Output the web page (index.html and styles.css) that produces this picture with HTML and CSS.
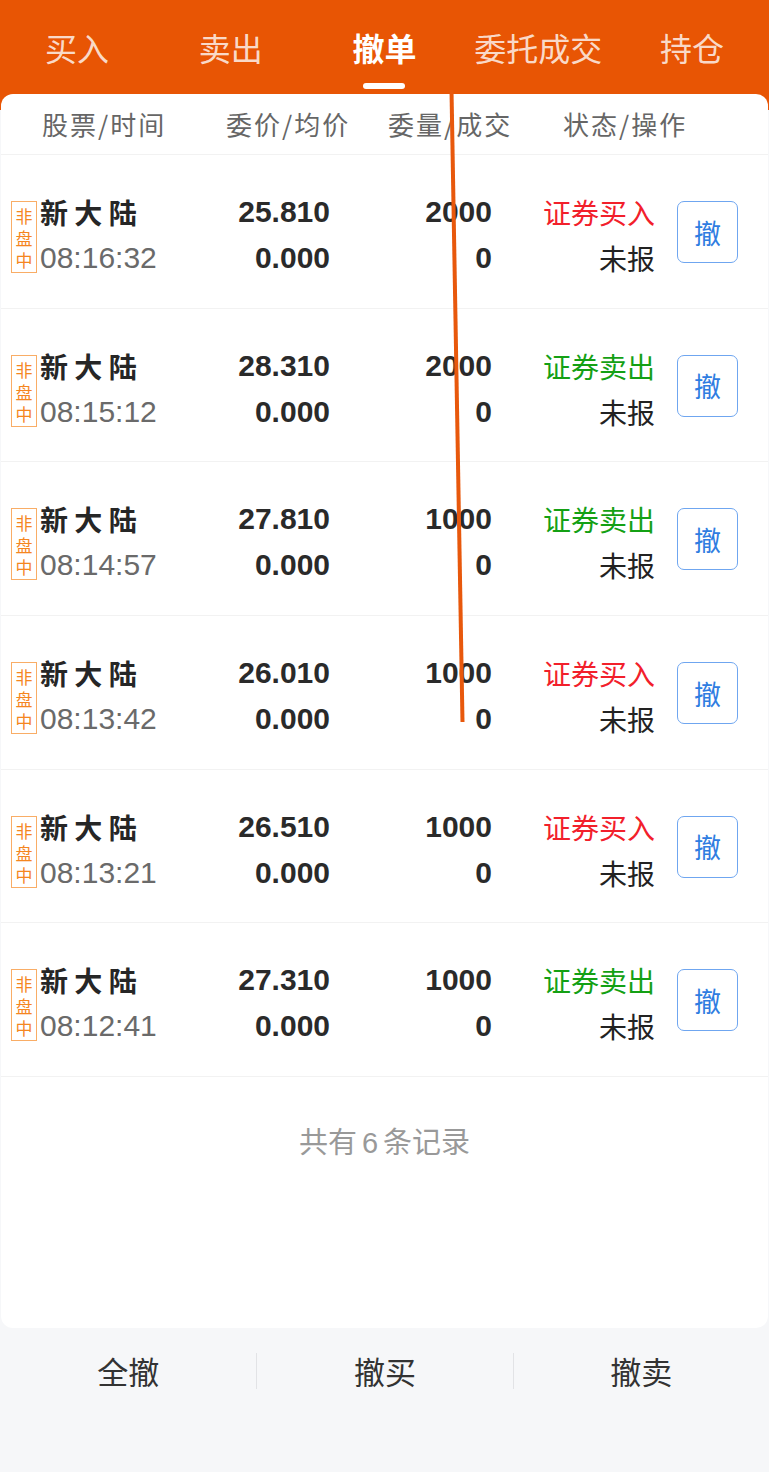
FILE: index.html
```html
<!DOCTYPE html>
<html lang="zh-CN">
<head>
    <meta charset="UTF-8">
    <meta name="viewport" content="width=device-width, initial-scale=1.0">
    <title>撤单</title>
    <link rel="stylesheet" href="styles.css">
</head>
<body>
    <div class="page">
        <div class="tabs">
            <div class="tab">买入</div>
            <div class="tab">卖出</div>
            <div class="tab active">撤单</div>
            <div class="tab">委托成交</div>
            <div class="tab">持仓</div>
        </div>

        <div class="card">
            <div class="list-head">
                <span>股票/时间</span>
                <span>委价/均价</span>
                <span>委量/成交</span>
                <span>状态/操作</span>
            </div>

            <div class="order">
                <div class="stock">
                    <div class="badge">非盘中</div>
                    <div>
                        <div class="name">新 大 陆</div>
                        <div class="time">08:16:32</div>
                    </div>
                </div>
                <div class="num"><div>25.810</div><div>0.000</div></div>
                <div class="num"><div>2000</div><div>0</div></div>
                <div class="status"><div class="buy">证券买入</div><div>未报</div></div>
                <button class="cancel">撤</button>
            </div>

            <div class="order">
                <div class="stock">
                    <div class="badge">非盘中</div>
                    <div>
                        <div class="name">新 大 陆</div>
                        <div class="time">08:15:12</div>
                    </div>
                </div>
                <div class="num"><div>28.310</div><div>0.000</div></div>
                <div class="num"><div>2000</div><div>0</div></div>
                <div class="status"><div class="sell">证券卖出</div><div>未报</div></div>
                <button class="cancel">撤</button>
            </div>

            <div class="order">
                <div class="stock">
                    <div class="badge">非盘中</div>
                    <div>
                        <div class="name">新 大 陆</div>
                        <div class="time">08:14:57</div>
                    </div>
                </div>
                <div class="num"><div>27.810</div><div>0.000</div></div>
                <div class="num"><div>1000</div><div>0</div></div>
                <div class="status"><div class="sell">证券卖出</div><div>未报</div></div>
                <button class="cancel">撤</button>
            </div>

            <div class="order">
                <div class="stock">
                    <div class="badge">非盘中</div>
                    <div>
                        <div class="name">新 大 陆</div>
                        <div class="time">08:13:42</div>
                    </div>
                </div>
                <div class="num"><div>26.010</div><div>0.000</div></div>
                <div class="num"><div>1000</div><div>0</div></div>
                <div class="status"><div class="buy">证券买入</div><div>未报</div></div>
                <button class="cancel">撤</button>
            </div>

            <div class="order">
                <div class="stock">
                    <div class="badge">非盘中</div>
                    <div>
                        <div class="name">新 大 陆</div>
                        <div class="time">08:13:21</div>
                    </div>
                </div>
                <div class="num"><div>26.510</div><div>0.000</div></div>
                <div class="num"><div>1000</div><div>0</div></div>
                <div class="status"><div class="buy">证券买入</div><div>未报</div></div>
                <button class="cancel">撤</button>
            </div>

            <div class="order">
                <div class="stock">
                    <div class="badge">非盘中</div>
                    <div>
                        <div class="name">新 大 陆</div>
                        <div class="time">08:12:41</div>
                    </div>
                </div>
                <div class="num"><div>27.310</div><div>0.000</div></div>
                <div class="num"><div>1000</div><div>0</div></div>
                <div class="status"><div class="sell">证券卖出</div><div>未报</div></div>
                <button class="cancel">撤</button>
            </div>

            <div class="total">共有<span class="count">6</span>条记录</div>
        </div>

        <div class="actions">
            <div class="action">全撤</div>
            <div class="action">撤买</div>
            <div class="action">撤卖</div>
        </div>

        <svg class="mark" width="769" height="1472" viewBox="0 0 769 1472">
            <line x1="451.5" y1="90" x2="462.5" y2="722" stroke="#e8580c" stroke-width="4"/>
        </svg>
    </div>
</body>
</html>
```

FILE: styles.css
```css
body {
    margin: 0;
    background-color: #f6f7f9;
    font-family: "Liberation Sans", "Noto Sans CJK SC", sans-serif;
    color: #222;
}
.page {
    position: relative;
    width: 769px;
    height: 1472px;
    overflow: hidden;
}
.tabs {
    display: grid;
    grid-template-columns: repeat(5, 1fr);
    height: 110px;
    background-color: #e85504;
}
.tab {
    position: relative;
    text-align: center;
    font-family: "Noto Sans CJK SC", sans-serif;
    font-size: 32px;
    line-height: 46px;
    padding-top: 24px;
    color: rgba(255, 255, 255, 0.8);
}
.tab.active {
    color: #fff;
    font-weight: bold;
}
.tab.active::after {
    content: "";
    position: absolute;
    left: 50%;
    top: 83px;
    width: 42px;
    height: 6px;
    margin-left: -21px;
    border-radius: 3px;
    background-color: #fff;
}
.card {
    margin: -16px 1px 0 1px;
    height: 1234px;
    background-color: #fff;
    border-radius: 12px;
}
.list-head {
    display: grid;
    grid-template-columns: 184px 162px 175px 1fr;
    padding-left: 41px;
    height: 60px;
    line-height: 60px;
    border-bottom: 1px solid #f2f2f2;
    font-family: "Noto Sans CJK SC", sans-serif;
    font-size: 26px;
    letter-spacing: 2px;
    color: #666;
}
.order {
    display: grid;
    grid-template-columns: 209px 110px 162px 163px 83px;
    align-items: start;
    box-sizing: border-box;
    height: 153.7px;
    padding: 34px 0 0 10px;
    border-bottom: 1px solid #f2f2f2;
    line-height: 46px;
}
.stock {
    display: flex;
    align-items: flex-start;
    gap: 3px;
}
.badge {
    width: 26px;
    box-sizing: border-box;
    height: 72px;
    margin-top: 12px;
    padding-top: 3px;
    border: 1px solid #f9ad66;
    font-family: "Noto Sans CJK SC", sans-serif;
    font-size: 17px;
    line-height: 22px;
    text-align: center;
    color: #f5861f;
}
.name {
    font-family: "Noto Sans CJK SC", sans-serif;
    font-size: 28px;
    font-weight: bold;
    color: #262626;
}
.time {
    font-size: 30px;
    color: #6a6a6a;
}
.num {
    text-align: right;
    font-size: 30px;
    font-weight: bold;
    color: #2a2a2a;
}
.status {
    text-align: right;
    font-family: "Noto Sans CJK SC", sans-serif;
    font-size: 28px;
    color: #222;
}
.buy {
    color: #f2202b;
}
.sell {
    color: #14a014;
}
.cancel {
    justify-self: end;
    width: 61px;
    height: 62px;
    margin-top: 12px;
    padding: 0;
    border: 1.5px solid #6fa6f0;
    border-radius: 7px;
    background-color: #fff;
    font-family: "Noto Sans CJK SC", sans-serif;
    font-size: 27px;
    color: #2f7de1;
}
.total {
    padding-top: 46px;
    line-height: 34px;
    text-align: center;
    font-family: "Noto Sans CJK SC", sans-serif;
    font-size: 29px;
    color: #999;
}
.count {
    font-family: "Liberation Sans", sans-serif;
    margin: 0 5px;
}
.actions {
    display: grid;
    grid-template-columns: repeat(3, 1fr);
    padding-top: 25px;
}
.action {
    text-align: center;
    font-family: "Noto Sans CJK SC", sans-serif;
    font-size: 31px;
    line-height: 36px;
    color: #333;
}
.action + .action {
    border-left: 1px solid #e2e3e6;
}
.mark {
    position: absolute;
    top: 0;
    left: 0;
    pointer-events: none;
}
```
